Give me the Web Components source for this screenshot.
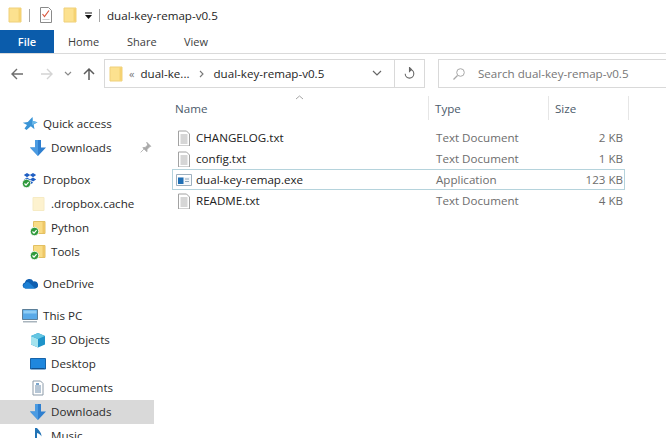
<!DOCTYPE html>
<html>
<head>
<meta charset="utf-8">
<title>dual-key-remap-v0.5</title>
<style>
html, body { margin: 0; height: 100%; overflow: hidden; background: #fff; }
body { font: 11.6px "Open Sans", sans-serif; color: #1e1e1e; }
</style>
</head>
<body>
<explorer-window>
  <title-bar slot="top">dual-key-remap-v0.5</title-bar>
  <ribbon-tabs slot="top"></ribbon-tabs>
  <nav-bar slot="top" crumb="dual-key-remap-v0.5"></nav-bar>
  <nav-pane slot="side">
    <nav-group>
      <nav-item icon="star" level="0">Quick access</nav-item>
      <nav-item icon="down" pinned>Downloads</nav-item>
    </nav-group>
    <nav-group>
      <nav-item icon="dropbox" level="0">Dropbox</nav-item>
      <nav-item icon="paleFolder">.dropbox.cache</nav-item>
      <nav-item icon="syncFolder">Python</nav-item>
      <nav-item icon="syncFolder">Tools</nav-item>
    </nav-group>
    <nav-group>
      <nav-item icon="cloud" level="0">OneDrive</nav-item>
    </nav-group>
    <nav-group>
      <nav-item icon="pc" level="0">This PC</nav-item>
      <nav-item icon="cube">3D Objects</nav-item>
      <nav-item icon="desktop">Desktop</nav-item>
      <nav-item icon="docs">Documents</nav-item>
      <nav-item icon="down" selected>Downloads</nav-item>
      <nav-item icon="music">Music</nav-item>
    </nav-group>
  </nav-pane>
  <file-list slot="main">
    <file-row icon="txt" type="Text Document" size="2 KB">CHANGELOG.txt</file-row>
    <file-row icon="txt" type="Text Document" size="1 KB">config.txt</file-row>
    <file-row icon="exe" type="Application" size="123 KB" focused>dual-key-remap.exe</file-row>
    <file-row icon="txt" type="Text Document" size="4 KB">README.txt</file-row>
  </file-list>
</explorer-window>

<script>
const syncBadge = `<circle cx="4.5" cy="11.500" r="4.200" fill="#2f9a3c" stroke="#fff" stroke-width=".8"/><path d="M2.500 11.500l1.500 1.600 2.600-3" fill="none" stroke="#fff" stroke-width="1.200"/>`

const ICONS = {
  folder: `<path d="M2 1h12v14H2z" fill="#fce18f" stroke="#efd07a"/><path d="M11.500 1.500H14v13h-2.500z" fill="#f5d272"/>`,
  paleFolder: `<path d="M3 1.500h11v13H3z" fill="#fdf2cf" stroke="#f6ebc4"/>`,
  syncFolder: `<path d="M3.500 1.500H15v12H3.500z" fill="#f9dc85" stroke="#e2c063"/><path d="M12.500 2H15v11h-2.500z" fill="#eec766"/>` + syncBadge,
  star: `<path d="M10.500 1l.4 4 4.600 1.200-3.900 2.300.9 4.800-3.700-3L4.500 14 2.500 12.500 5 9 .8 6.800l5-.8z" fill="#3a94d6"/><path d="M10.500 1l.4 4 4.600 1.200-5.500 2.800z" fill="#6bb9ea"/>`,
  down: `<path d="M5 0h6v7.500h5L8 16 0 7.500h5z" fill="#2f7fcf"/><path d="M5 0h3v16L0 7.500h5z" fill="#4b9be2"/>`,
  dropbox: `<path d="M5 1l3.200 2.100L5 5.200 1.800 3.100zM11 1l3.200 2.100L11 5.200 7.800 3.100zM5 5.400l3.200 2.100L5 9.600 1.800 7.500zM11 5.400l3.200 2.100L11 9.600 7.800 7.500zM8 8.600l3.200 2.100L8 12.800 4.800 10.700z" fill="#1f5fc4"/>` + syncBadge,
  cloud: `<path d="M3.500 12.500a3 3 0 0 1-.6-5.900 4.600 4.600 0 0 1 8.500-1.200 3.600 3.600 0 0 1 2.100 7.100z" fill="#0f5fb0"/><path d="M3.500 12.500a2.600 2.600 0 0 1-.4-5 3 3 0 0 1 4.400-.4l5.800 5.400z" fill="#1d80d4"/>`,
  pc: `<path d="M.5 1.500h15v10H.5z" fill="#58a9e8" stroke="#5c7f99"/><path d="M1.500 2.500h13v3h-13z" fill="#8fcdf5"/><path d="M1 13h14v1.500H1z" fill="#a8b4bd"/>`,
  cube: `<path d="M8 1l7 3v8.500L8 15.500 1 12.500V4z" fill="#1f93c9"/><path d="M1 4l7 3v8.500l-7-3z" fill="#a4e3ee"/><path d="M8 1l7 3-7 3-7-3z" fill="#63c5e2"/>`,
  desktop: `<path d="M.5 2.500h15v10.500H.5z" fill="#1e87de" stroke="#1763a8"/><path d="M1.500 12h13v1h-13z" fill="#12508c"/>`,
  docs: `<path d="M3 1h7.500L13 3.500V15H3z" fill="#fff" stroke="#8b9aa8"/><path d="M5 6h6M5 8h6M5 10h6M5 12h6" stroke="#6c8cab"/><path d="M6 3h3v2H6z" fill="#7aa5cc"/>`,
  music: `<path d="M5 0v12a3 3 0 1 0 2 2.800V5c2 .4 3.600 1.500 4.500 3.500C11.500 4.500 9 2.500 7 0z" fill="#2273b5"/>`,
  pin: `<path d="M9.500 1.500l5 5-1.500.7-3 3-.3 3-5-5 3-.3 3-3zM6 10l-4 4" fill="#a9a9a9" stroke="#a9a9a9"/>`,
  txt: `<path d="M2.500 1h8l3 3v12h-11z" fill="#fff" stroke="#a2a2a2"/><path d="M4.500 5h7M4.500 7h7M4.500 9h7M4.500 11h7M4.500 13h7" stroke="#adadad"/>`,
  exe: `<path d="M.5 2.500h15v11H.5z" fill="#fff" stroke="#9db0bf"/><path d="M1.500 5h13v7.500h-13z" fill="#f3f6f9"/><path d="M2 5.500h5.500v6.500H2z" fill="#1f6fb5"/><path d="M9 7h4M9 9.500h4" stroke="#8fa8bc"/>`,
  note: `<path d="M2.500 .5h8l3 3v12h-11z" fill="#fff" stroke="#8a8a8a"/><path d="M4.500 7l2 2.500 4.500-6" fill="none" stroke="#d9583f" stroke-width="1.200"/><path d="M4.500 12.500h7" stroke="#d0d0d0"/>`
}

// small helper so each class does not repeat the shadow boilerplate
class Base extends HTMLElement {
  render(html) {
    this.attachShadow({ mode: "open" }).innerHTML = html
  }
}

class UiIcon extends Base {
  connectedCallback() {
    if (this.shadowRoot) return
    const size = this.getAttribute("size") || 16
    this.render(`<style>:host{display:block;width:${size}px;height:${size}px;flex:none} svg{display:block}</style>
      <svg width="${size}" height="${size}" viewBox="0 0 16 16">${ICONS[this.getAttribute("name")] || ""}</svg>`)
  }
}

class ExplorerWindow extends Base {
  constructor() {
    super()
    this.render(`<style>
      :host{display:flex;flex-direction:column;width:666px;height:438px;overflow:hidden;background:#fff}
      .body{display:flex;flex:1;min-height:0}
    </style>
    <slot name="top"></slot>
    <div class="body"><slot name="side"></slot><slot name="main"></slot></div>`)
  }
}

class TitleBar extends Base {
  constructor() {
    super()
    this.render(`<style>
      :host{display:flex;align-items:center;height:30px;padding-left:7px;box-sizing:border-box;font-size:11.6px;color:#1e1e1e}
      .sep{width:1px;height:13px;background:#a5a5a5;flex:none}
      .caret{width:9px;height:9px;margin:0 6px;flex:none}
    </style>
    <ui-icon name="folder" style="margin-right:6px"></ui-icon>
    <span class="sep" style="margin-right:8px"></span>
    <ui-icon name="note" style="margin-right:8px"></ui-icon>
    <ui-icon name="folder"></ui-icon>
    <svg class="caret" viewBox="0 0 9 9"><path d="M1 1.500h7v1H1zM1 4h7L4.500 8z" fill="#111"/></svg>
    <span class="sep" style="margin-right:7px"></span>
    <slot></slot>`)
  }
}

class RibbonTabs extends Base {
  constructor() {
    super()
    this.render(`<style>
      :host{display:flex;height:24px;border-bottom:1px solid #dadada;box-sizing:border-box;font-size:11px;color:#3d3d3d}
      .file{width:54px;height:23px;background:#0b5cab;color:#fff;display:flex;align-items:center;justify-content:center;font-weight:600}
      .tab{display:flex;align-items:center;height:23px;padding-left:14px;box-sizing:border-box}
    </style>
    <div class="file">File</div>
    <div class="tab" style="width:59px">Home</div><div class="tab" style="width:57px">Share</div><div class="tab" style="width:50px">View</div>`)
  }
}

class NavBar extends Base {
  constructor() {
    super()
    const crumb = this.getAttribute("crumb")
    this.render(`<style>
      :host{display:flex;height:38px;box-sizing:border-box;padding-top:5px;font-size:11.6px;color:#1e1e1e}
      .arrows{width:104px;flex:none;display:flex;align-items:center;height:29px;padding-left:10px;box-sizing:border-box}
      .arrows svg{display:block;flex:none}
      .addr{width:321px;height:29px;box-sizing:border-box;border:1px solid #d9d9d9;display:flex;align-items:center;flex:none}
      .addr ui-icon{margin:0 5px 0 3px}
      .ch{color:#777;font-size:11px}
      .crumb{white-space:nowrap}
      .grow{flex:1}
      .drop{width:26px;padding-right:4px;display:flex;justify-content:center}
      .refresh{width:30px;height:100%;border-left:1px solid #d9d9d9;display:flex;align-items:center;justify-content:center;box-sizing:border-box}
      .search{margin-left:13px;flex:1;height:29px;box-sizing:border-box;border:1px solid #d9d9d9;border-right:0;display:flex;align-items:center;color:#767676;white-space:nowrap}
      .search svg{margin:0 12px 0 13px}
    </style>
    <div class="arrows">
      <svg width="14" height="14" viewBox="0 0 14 14"><path d="M13 7H2M7 2L2 7l5 5" fill="none" stroke="#6e6e6e" stroke-width="1.400"/></svg>
      <svg width="14" height="14" viewBox="0 0 14 14" style="margin-left:16px"><path d="M1 7h11M7 2l5 5-5 5" fill="none" stroke="#d4d4d4" stroke-width="1.400"/></svg>
      <svg width="8" height="6" viewBox="0 0 8 6" style="margin-left:10px"><path d="M1 1l3 3 3-3" fill="none" stroke="#8a8a8a" stroke-width="1.200"/></svg>
      <svg width="14" height="14" viewBox="0 0 14 14" style="margin-left:10px"><path d="M7 13V2M2 7l5-5 5 5" fill="none" stroke="#5c5c5c" stroke-width="1.500"/></svg>
    </div>
    <div class="addr">
      <ui-icon name="folder"></ui-icon>
      <span class="ch" style="margin-right:6px">&laquo;</span>
      <span class="crumb">dual-ke...</span>
      <svg width="6" height="8" viewBox="0 0 6 8" style="margin:0 9px 0 9px"><path d="M1 1l3 3-3 3" fill="none" stroke="#777" stroke-width="1.100"/></svg>
      <span class="crumb">${crumb}</span>
      <span class="grow"></span>
      <span class="drop"><svg width="10" height="7" viewBox="0 0 10 7"><path d="M1 1l4 4 4-4" fill="none" stroke="#666" stroke-width="1.200"/></svg></span>
      <span class="refresh"><svg width="13" height="13" viewBox="0 0 13 13"><path d="M6.500 2.500a4.300 4.300 0 1 1-4.300 4.300M6.500 .5v4l2-2z" fill="none" stroke="#666" stroke-width="1.100"/></svg></span>
    </div>
    <div class="search">
      <svg width="14" height="14" viewBox="0 0 14 14"><circle cx="8.500" cy="5.500" r="3.800" fill="none" stroke="#a8a8a8"/><path d="M5.500 8.500L1.500 12.500" stroke="#a8a8a8" stroke-width="1.200"/></svg>
      Search ${crumb}
    </div>`)
  }
}

class NavPane extends Base {
  constructor() {
    super()
    this.render(`<style>
      :host{display:block;width:157px;flex:none;padding-top:20px;box-sizing:border-box;overflow:hidden}
    </style><slot></slot>`)
  }
}

class NavGroup extends Base {
  constructor() {
    super()
    this.render(`<style>:host{display:block;margin-bottom:8px}</style><slot></slot>`)
  }
}

class NavItem extends Base {
  constructor() {
    super()
    const top = this.getAttribute("level") === "0"
    const selected = this.hasAttribute("selected")
    const pinned = this.hasAttribute("pinned")
    this.render(`<style>
      :host{display:flex;align-items:center;width:154px;height:24px;box-sizing:border-box;padding:0 0 1px ${top ? 22 : 30}px;font-size:11.6px;color:#2b2b2b;white-space:nowrap;background:${selected ? "#d9d9d9" : "transparent"}}
      ui-icon{margin-right:5px}
      .pin{margin-left:auto;margin-right:2px}
    </style>
    <ui-icon name="${this.getAttribute("icon")}"></ui-icon><slot></slot>
    ${pinned ? `<ui-icon class="pin" name="pin" size="13"></ui-icon>` : ""}`)
  }
}

class FileList extends Base {
  constructor() {
    super()
    this.render(`<style>
      :host{display:block;flex:1;min-width:0;padding-left:15px;box-sizing:border-box;position:relative}
      .head{display:grid;grid-template-columns:257px 120px 80px;height:24px;margin-top:4px;font-size:11.6px;color:#4c5b6b}
      .head div{display:flex;align-items:center;box-sizing:border-box;padding-left:6px;border-right:1px solid #e6e6e6}
      .head div:first-child{padding-left:3px}
      .rows{padding-top:7px;width:453px}
      .sort{position:absolute;left:138px;top:3px}
    </style>
    <svg class="sort" width="9" height="5" viewBox="0 0 9 5"><path d="M1 4l3.500-3L8 4" fill="none" stroke="#a5a5a5"/></svg>
    <div class="head"><div>Name</div><div>Type</div><div>Size</div></div>
    <div class="rows"><slot></slot></div>`)
  }
}

class FileRow extends Base {
  constructor() {
    super()
    const focused = this.hasAttribute("focused")
    this.render(`<style>
      :host{display:grid;grid-template-columns:257px 120px 73px;height:21px;align-items:center;box-sizing:border-box;font-size:11.6px;border:1px solid ${focused ? "#b5d3dc" : "transparent"}}
      .name{display:flex;align-items:center;gap:4px;padding-left:3px;color:#222;white-space:nowrap}
      .type{padding-left:6px;color:#6d6d6d}
      .size{text-align:right;color:#6d6d6d}
    </style>
    <div class="name"><ui-icon name="${this.getAttribute("icon")}"></ui-icon><slot></slot></div>
    <div class="type">${this.getAttribute("type")}</div>
    <div class="size">${this.getAttribute("size")}</div>`)
  }
}

customElements.define("ui-icon", UiIcon)
customElements.define("explorer-window", ExplorerWindow)
customElements.define("title-bar", TitleBar)
customElements.define("ribbon-tabs", RibbonTabs)
customElements.define("nav-bar", NavBar)
customElements.define("nav-pane", NavPane)
customElements.define("nav-group", NavGroup)
customElements.define("nav-item", NavItem)
customElements.define("file-list", FileList)
customElements.define("file-row", FileRow)
</script>
</body>
</html>
